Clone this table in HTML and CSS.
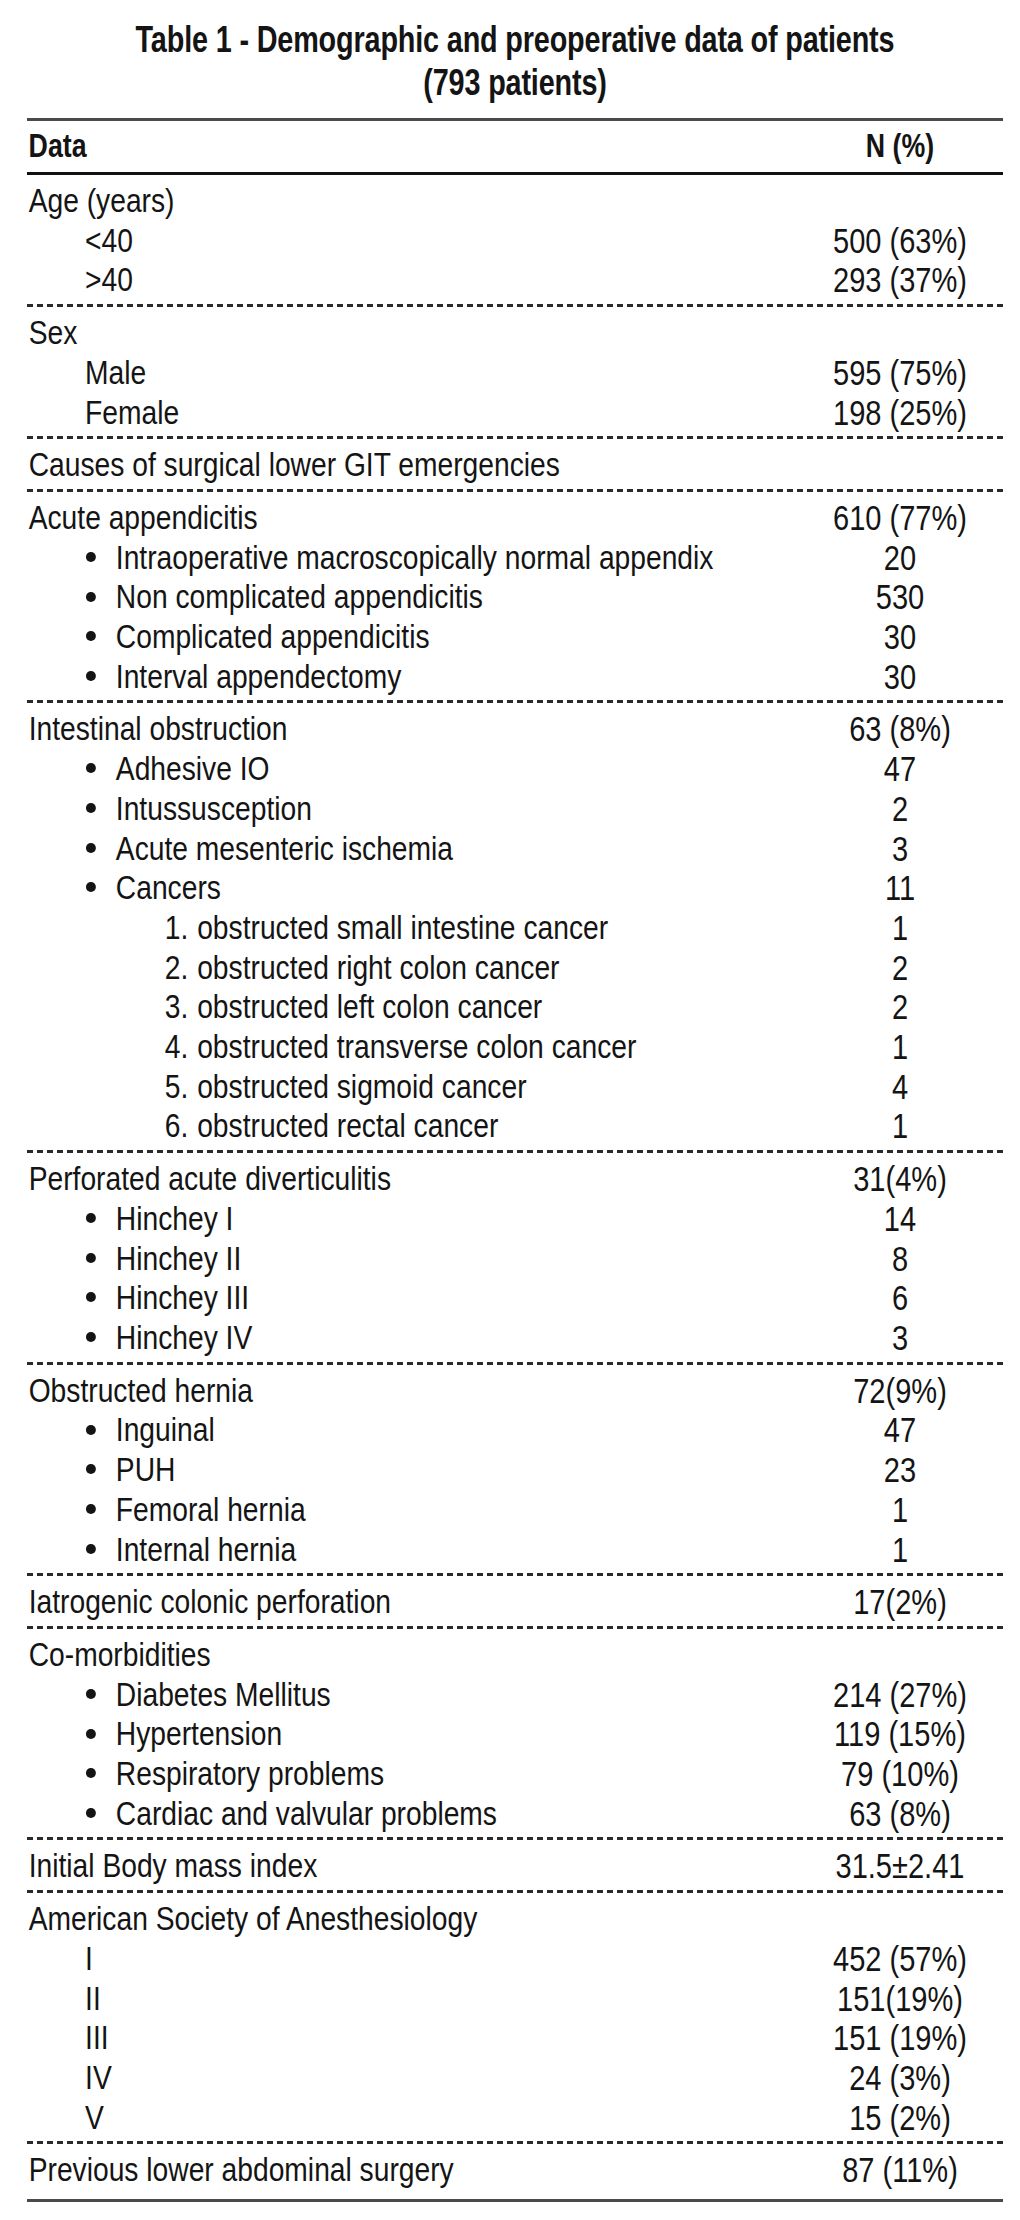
FILE: index.html
```html
<!DOCTYPE html>
<html lang="en">
<head>
<meta charset="utf-8">
<title>Table 1 - Demographic and preoperative data of patients</title>
<link rel="stylesheet" href="styles.css">
</head>
<body>
<div class="page">
  <h1 class="title">Table 1 - Demographic and preoperative data of patients<br>(793 patients)</h1>
  <div class="table">
    <div class="head row"><span class="label">Data</span><span class="val">N (%)</span></div>

    <div class="group">
      <div class="row"><span class="label">Age (years)</span><span class="val"></span></div>
      <div class="row sub"><span class="label">&lt;40</span><span class="val">500 (63%)</span></div>
      <div class="row sub"><span class="label">&gt;40</span><span class="val">293 (37%)</span></div>
    </div>

    <div class="group">
      <div class="row"><span class="label">Sex</span><span class="val"></span></div>
      <div class="row sub"><span class="label">Male</span><span class="val">595 (75%)</span></div>
      <div class="row sub"><span class="label">Female</span><span class="val">198 (25%)</span></div>
    </div>

    <div class="group">
      <div class="row"><span class="label">Causes of surgical lower GIT emergencies</span><span class="val"></span></div>
    </div>

    <div class="group">
      <div class="row"><span class="label">Acute appendicitis</span><span class="val">610 (77%)</span></div>
      <div class="row bul"><span class="label">Intraoperative macroscopically normal appendix</span><span class="val">20</span></div>
      <div class="row bul"><span class="label">Non complicated appendicitis</span><span class="val">530</span></div>
      <div class="row bul"><span class="label">Complicated appendicitis</span><span class="val">30</span></div>
      <div class="row bul"><span class="label">Interval appendectomy</span><span class="val">30</span></div>
    </div>

    <div class="group">
      <div class="row"><span class="label">Intestinal obstruction</span><span class="val">63 (8%)</span></div>
      <div class="row bul"><span class="label">Adhesive IO</span><span class="val">47</span></div>
      <div class="row bul"><span class="label">Intussusception</span><span class="val">2</span></div>
      <div class="row bul"><span class="label">Acute mesenteric ischemia</span><span class="val">3</span></div>
      <div class="row bul"><span class="label">Cancers</span><span class="val">11</span></div>
      <div class="row num"><span class="label"><span class="n">1.</span>obstructed small intestine cancer</span><span class="val">1</span></div>
      <div class="row num"><span class="label"><span class="n">2.</span>obstructed right colon cancer</span><span class="val">2</span></div>
      <div class="row num"><span class="label"><span class="n">3.</span>obstructed left colon cancer</span><span class="val">2</span></div>
      <div class="row num"><span class="label"><span class="n">4.</span>obstructed transverse colon cancer</span><span class="val">1</span></div>
      <div class="row num"><span class="label"><span class="n">5.</span>obstructed sigmoid cancer</span><span class="val">4</span></div>
      <div class="row num"><span class="label"><span class="n">6.</span>obstructed rectal cancer</span><span class="val">1</span></div>
    </div>

    <div class="group">
      <div class="row"><span class="label">Perforated acute diverticulitis</span><span class="val">31(4%)</span></div>
      <div class="row bul"><span class="label">Hinchey I</span><span class="val">14</span></div>
      <div class="row bul"><span class="label">Hinchey II</span><span class="val">8</span></div>
      <div class="row bul"><span class="label">Hinchey III</span><span class="val">6</span></div>
      <div class="row bul"><span class="label">Hinchey IV</span><span class="val">3</span></div>
    </div>

    <div class="group">
      <div class="row"><span class="label">Obstructed hernia</span><span class="val">72(9%)</span></div>
      <div class="row bul"><span class="label">Inguinal</span><span class="val">47</span></div>
      <div class="row bul"><span class="label">PUH</span><span class="val">23</span></div>
      <div class="row bul"><span class="label">Femoral hernia</span><span class="val">1</span></div>
      <div class="row bul"><span class="label">Internal hernia</span><span class="val">1</span></div>
    </div>

    <div class="group">
      <div class="row"><span class="label">Iatrogenic colonic perforation</span><span class="val">17(2%)</span></div>
    </div>

    <div class="group">
      <div class="row"><span class="label">Co-morbidities</span><span class="val"></span></div>
      <div class="row bul"><span class="label">Diabetes Mellitus</span><span class="val">214 (27%)</span></div>
      <div class="row bul"><span class="label">Hypertension</span><span class="val">119 (15%)</span></div>
      <div class="row bul"><span class="label">Respiratory problems</span><span class="val">79 (10%)</span></div>
      <div class="row bul"><span class="label">Cardiac and valvular problems</span><span class="val">63 (8%)</span></div>
    </div>

    <div class="group">
      <div class="row"><span class="label">Initial Body mass index</span><span class="val">31.5±2.41</span></div>
    </div>

    <div class="group">
      <div class="row"><span class="label">American Society of Anesthesiology</span><span class="val"></span></div>
      <div class="row sub"><span class="label">I</span><span class="val">452 (57%)</span></div>
      <div class="row sub"><span class="label">II</span><span class="val">151(19%)</span></div>
      <div class="row sub"><span class="label">III</span><span class="val">151 (19%)</span></div>
      <div class="row sub"><span class="label">IV</span><span class="val">24 (3%)</span></div>
      <div class="row sub"><span class="label">V</span><span class="val">15 (2%)</span></div>
    </div>

    <div class="group last">
      <div class="row"><span class="label">Previous lower abdominal surgery</span><span class="val">87 (11%)</span></div>
    </div>
  </div>
</div>
</body>
</html>
```
FILE: styles.css
```css
html, body {
  margin: 0;
  padding: 0;
  background: #ffffff;
}

/* Helvetica Condensed look: Arial-metric face, horizontally condensed */
body {
  font-family: "Liberation Sans Narrow", "Arial Narrow", "Liberation Sans", Arial, sans-serif;
  color: #141414;
}

.page {
  width: 1020px;
  padding-top: 18px;
}

.title {
  margin: 0 0 14px 27px;
  width: 976px;
  text-align: center;
  font-size: 36px;
  line-height: 43px;
  font-weight: 700;
  transform: scaleX(0.8);
  transform-origin: 50% 50%;
  letter-spacing: -0.2px;
}

.table {
  margin-left: 27px;
  width: 976px;
  border-top: 3px solid #4a4a4a;
  border-bottom: 3px solid #4a4a4a;
}

.row {
  display: grid;
  grid-template-columns: minmax(0, 1fr) 206px;
  font-size: 34px;
  line-height: 39.7px;
}

.label {
  min-width: 0;
  overflow: visible;
  padding-left: 2px;
  white-space: nowrap;
  transform: scaleX(0.83);
  transform-origin: 0 50%;
}

.val {
  font-size: 35px;
  text-align: center;
  white-space: nowrap;
  transform: scaleX(0.83);
  transform-origin: 50% 50%;
}

.head {
  font-size: 33px;
  line-height: 40px;
  font-weight: 700;
  padding: 5px 0 6px;
  border-bottom: 3px solid #111111;
}

.head .label,
.head .val {
  font-size: 33px;
  transform: scaleX(0.81);
}

.group {
  padding: 6px 0 7px;
  background-image: linear-gradient(to right, #2a2a2a 60%, transparent 60%);
  background-size: 10px 3px;
  background-repeat: repeat-x;
  background-position: left bottom;
}

.group.last {
  background-image: none;
  padding-bottom: 9px;
}

/* indents are divided by the 0.83 condensing factor */
.sub .label {
  padding-left: 70px;
}

.bul .label {
  padding-left: 71px;
}

.bul .label::before {
  content: "";
  display: inline-block;
  width: 12px;
  height: 10px;
  border-radius: 50%;
  background: #141414;
  margin-right: 24px;
  vertical-align: 0.2em;
}

.num .label {
  padding-left: 166px;
}

.n {
  display: inline-block;
  width: 39px;
}
```
